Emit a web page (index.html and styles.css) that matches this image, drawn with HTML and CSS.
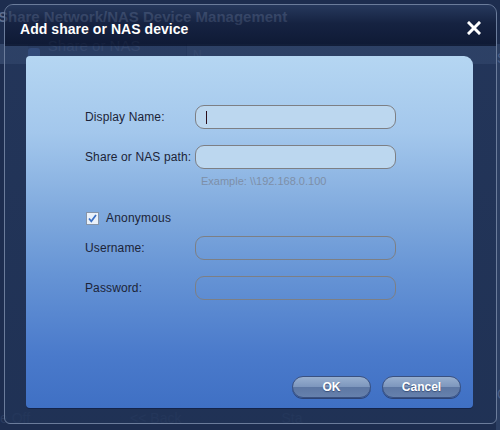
FILE: index.html
```html
<!DOCTYPE html>
<html>
<head>
<meta charset="utf-8">
<link rel="stylesheet" href="styles.css">
</head>
<body>
<div class="bgwin">
  <div class="bg-title">Share Network/NAS Device Management</div>
  <div class="bg-tabs">
    <div class="bg-tab"><span class="bg-tab-icon"></span>Share or NAS device</div>
    <div class="bg-col">N</div>
  </div>
  <div class="bg-side">
    <span class="bg-side-top">Si</span>
    <span class="bg-side-bot">Ca</span>
  </div>
  <div class="bg-foot"><span>e Off</span><span>&lt;&lt; Back</span><span>Sta</span></div>
</div>

<div class="dialog">
  <div class="titlebar">
    <span class="title">Add share or NAS device</span>
    <svg class="close" width="14" height="14" viewBox="0 0 14 14"><path d="M2 2 L12 12 M12 2 L2 12" stroke="#fff" stroke-width="3" stroke-linecap="square"/></svg>
  </div>
  <div class="body">
    <div class="panel">
      <div class="row">
        <label class="lbl">Display Name:</label>
        <div class="field active"><span class="caret"></span></div>
      </div>
      <div class="row r2">
        <label class="lbl">Share or NAS path:</label>
        <div class="field active"></div>
      </div>
      <div class="hint">Example: \\192.168.0.100</div>
      <div class="check-row">
        <span class="checkbox"><svg width="11" height="11" viewBox="0 0 11 11"><path d="M2 5.5 L4.3 8.3 L9 2" stroke="#3a6fc4" stroke-width="1.7" fill="none"/></svg></span>
        <span class="check-lbl">Anonymous</span>
      </div>
      <div class="row r3">
        <label class="lbl">Username:</label>
        <div class="field disabled"></div>
      </div>
      <div class="row r2">
        <label class="lbl">Password:</label>
        <div class="field disabled"></div>
      </div>
      <div class="buttons">
        <button class="btn">OK</button>
        <button class="btn">Cancel</button>
      </div>
    </div>
  </div>
</div>
</body>
</html>
```
FILE: styles.css
```css
html, body {
  margin: 0;
  padding: 0;
}
body {
  width: 500px;
  height: 430px;
  overflow: hidden;
  position: relative;
  background: #1d2d4f;
  font-family: "Liberation Sans", Arial, sans-serif;
}
.bgwin {
  position: absolute;
  left: 0;
  top: 0;
  width: 500px;
  height: 430px;
  background: #1d2d4f;
}
.bg-title {
  position: absolute;
  left: -2px;
  top: 8px;
  font-weight: bold;
  font-size: 15px;
  color: #5c6d8f;
  white-space: nowrap;
}
.bg-tabs {
  position: absolute;
  left: 0;
  top: 44px;
  width: 500px;
  height: 20px;
  background: #33466a;
  display: flex;
}
.bg-tab {
  margin-left: 28px;
  width: 158px;
  display: flex;
  align-items: center;
  gap: 8px;
  color: #44567a;
  font-size: 15px;
  background: #2c3f63;
  border-right: 1px solid #24365a;
}
.bg-tab-icon {
  width: 12px;
  height: 12px;
  border-radius: 3px;
  background: #3f5c96;
}
.bg-col {
  margin-left: 6px;
  color: #44567a;
  font-size: 12px;
  padding-top: 4px;
}
.bg-side {
  position: absolute;
  left: 496px;
  top: 44px;
  width: 4px;
  height: 386px;
  background: #2c3f63;
}
.bg-side-top, .bg-side-bot {
  position: absolute;
  left: 1px;
  font-size: 14px;
  color: #4d6088;
}
.bg-side-top { top: 6px; }
.bg-side-bot { top: 342px; }
.bg-foot {
  position: absolute;
  left: 0;
  top: 410px;
  width: 500px;
  height: 20px;
  display: flex;
  gap: 100px;
  font-size: 14px;
  color: #2a3c60;
}

.dialog {
  position: absolute;
  left: 4px;
  top: 4px;
  width: 491px;
  height: 418px;
  border: 1px solid #6b7c9b;
  border-radius: 9px 9px 6px 6px;
  background: linear-gradient(to bottom, rgba(18, 29, 56, 0.0) 0px, rgba(18, 29, 56, 0.0) 41px, rgba(40, 60, 98, 0.55) 41px, rgba(33, 52, 88, 0.7) 100%);
  display: flex;
  flex-direction: column;
  box-sizing: content-box;
}
.titlebar {
  height: 41px;
  border-radius: 8px 8px 0 0;
  background: linear-gradient(to bottom, rgba(46, 66, 104, 0.55) 0%, rgba(17, 28, 57, 0.62) 45%, rgba(12, 22, 48, 0.85) 100%);
  display: flex;
  align-items: center;
  justify-content: space-between;
  padding: 6px 15px 0 15px;
  box-sizing: border-box;
}
.title {
  color: #ffffff;
  font-weight: bold;
  font-size: 14px;
  letter-spacing: 0.05px;
}
.close {
  display: block;
  margin-top: -2px;
}
.body {
  flex: 1;
  display: flex;
  padding: 10px 23px 15px 21px;
}
.panel {
  flex: 1;
  border-radius: 4px 9px 4px 4px;
  background: linear-gradient(to bottom, #b5d6f2 0%, #a3c7ec 22%, #7fa9dd 45%, #6694d5 62%, #4a7acb 85%, #3f70c4 100%);
  padding: 49px 12px 10px 59px;
  display: flex;
  flex-direction: column;
  box-shadow: 0 1px 0 #14244a;
}
.row {
  display: flex;
  align-items: center;
  height: 24px;
}
.r2 { margin-top: 16px; }
.r3 { margin-top: 10px; }
.lbl {
  width: 110px;
  font-size: 12px;
  letter-spacing: 0.12px;
  color: #1c2438;
  white-space: nowrap;
}
.field {
  width: 199px;
  height: 22px;
  border: 1px solid #7d7f84;
  border-radius: 9px;
  display: flex;
  align-items: center;
}
.field.active {
  background: #bcd7ef;
}
.field.disabled {
  background: transparent;
}
.caret {
  width: 1px;
  height: 13px;
  margin-left: 10px;
  background: #2a0d1a;
}
.hint {
  margin-top: 6px;
  padding-left: 116px;
  font-size: 11px;
  line-height: 13px;
  color: #7d8fa8;
}
.check-row {
  margin-top: 22px;
  height: 16px;
  display: flex;
  align-items: center;
  gap: 7px;
  padding-left: 1px;
}
.checkbox {
  width: 11px;
  height: 11px;
  border: 1px solid #8694a8;
  background: #eaf1fa;
  display: flex;
}
.check-lbl {
  font-size: 12px;
  letter-spacing: 0.2px;
  color: #1c2438;
}
.buttons {
  margin-top: auto;
  display: flex;
  justify-content: flex-end;
  gap: 11px;
}
.btn {
  width: 79px;
  height: 22px;
  border: 1px solid #3a5180;
  border-radius: 11px;
  background: linear-gradient(to bottom, #98afcf 0%, #7d96bd 50%, #5d77a3 52%, #6681ad 100%);
  color: #ffffff;
  font-family: "Liberation Sans", Arial, sans-serif;
  font-weight: bold;
  font-size: 12px;
  text-shadow: 0 1px 1px #3a4f78;
  padding: 0;
  box-shadow: 0 1px 0 #2d4475;
}
```
